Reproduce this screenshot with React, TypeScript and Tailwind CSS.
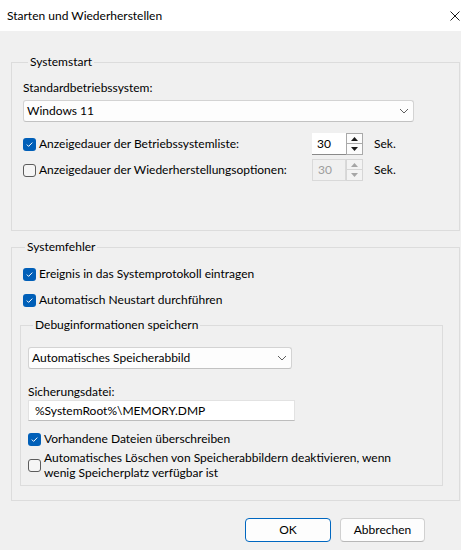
import React from 'react';

function Checkbox({ checked }: { checked?: boolean }) {
  if (checked) {
    return (
      <span className="flex h-[13px] w-[13px] shrink-0 items-center justify-center rounded-[3px] bg-[#005fb8]">
        <svg width="9" height="9" viewBox="0 0 9 9">
          <path d="M1.8 4.6 3.6 6.4 7.3 2.6" fill="none" stroke="#ffffff" strokeWidth="1" />
        </svg>
      </span>
    );
  }
  return <span className="h-[13px] w-[13px] shrink-0 rounded-[3px] border border-[#5c5c5c] bg-[#f5f5f5]" />;
}

function Chevron() {
  return (
    <svg width="10" height="6" viewBox="0 0 10 6">
      <path d="M1 1 5 5 9 1" fill="none" stroke="#5f5f5f" strokeWidth="1" />
    </svg>
  );
}

function Spin({ value, disabled }: { value: string; disabled?: boolean }) {
  const tri = disabled ? '#a6a6a6' : '#1a1a1a';
  const btn = disabled ? 'border-[#d6d6d6] bg-[#f3f3f3]' : 'border-[#a9a9a9] bg-[#fcfcfc]';
  return (
    <div className="flex h-[22px]">
      <div
        className={
          disabled
            ? 'flex w-[34px] items-center border border-[#d9d9d9] pl-[5px] text-[#9d9d9d]'
            : 'flex w-[34px] items-center border-b border-[#8a8a8a] bg-white pl-[5px]'
        }
      >
        {value}
      </div>
      <div className="flex w-[17px] flex-col">
        <div className={`flex h-[11px] items-center justify-center border ${btn}`}>
          <svg width="7" height="4" viewBox="0 0 7 4">
            <path d="M0 4 3.5 0 7 4Z" fill={tri} />
          </svg>
        </div>
        <div className={`flex h-[11px] items-center justify-center border border-t-0 ${btn}`}>
          <svg width="7" height="4" viewBox="0 0 7 4">
            <path d="M0 0 3.5 4 7 0Z" fill={tri} />
          </svg>
        </div>
      </div>
    </div>
  );
}

function Group({ title, className, children }: { title: string; className?: string; children: React.ReactNode }) {
  return (
    <fieldset className={`border border-[#dcdcdc] ${className ?? ''}`}>
      <legend className="ml-[5px] px-[2px] leading-4">{title}</legend>
      {children}
    </fieldset>
  );
}

export default function App() {
  return (
    <div className="h-[550px] w-[461px] overflow-hidden bg-[#f0f0f0] font-['Lato',sans-serif] text-[12px] leading-4 text-black">
      {/* Title bar */}
      <div className="flex h-[31px] items-center justify-between bg-white pl-[7px] pr-[1px]">
        <span>Starten und Wiederherstellen</span>
        <svg width="10" height="10" viewBox="0 0 10 10">
          <path d="M0.5 0.5 9.5 9.5M9.5 0.5 0.5 9.5" stroke="#1a1a1a" strokeWidth="1" />
        </svg>
      </div>

      <div className="pl-[11px] pt-[23px]">
        {/* Systemstart */}
        <Group title="Systemstart" className="w-[449px] pb-[49px] pl-[11px]">
          <div className="mt-[10px]">Standardbetriebssystem:</div>
          <div className="mt-[4px] flex h-[22px] w-[391px] items-center justify-between rounded-[3px] border border-[#d3d3d3] border-b-[#c2c2c2] bg-[#fdfdfd] pl-[3px] pr-[4px]">
            <span>Windows 11</span>
            <Chevron />
          </div>
          <div className="mt-[11px] flex items-center">
            <div className="flex w-[289px] items-center gap-[3px]">
              <Checkbox checked />
              <span>Anzeigedauer der Betriebssystemliste:</span>
            </div>
            <Spin value="30" />
            <span className="ml-[11px]">Sek.</span>
          </div>
          <div className="mt-[4px] flex items-center">
            <div className="flex w-[289px] items-center gap-[3px]">
              <Checkbox />
              <span>Anzeigedauer der Wiederherstellungsoptionen:</span>
            </div>
            <Spin value="30" disabled />
            <span className="ml-[11px]">Sek.</span>
          </div>
        </Group>

        {/* Systemfehler */}
        <Group title="Systemfehler" className="mt-[8px] w-[449px] pb-[14px] pl-[8px]">
          <div className="ml-[3px] mt-[11px] flex items-center gap-[3px]">
            <Checkbox checked />
            <span>Ereignis in das Systemprotokoll eintragen</span>
          </div>
          <div className="ml-[3px] mt-[10px] flex items-center gap-[3px]">
            <Checkbox checked />
            <span>Automatisch Neustart durchführen</span>
          </div>

          <Group title="Debuginformationen speichern" className="mt-[9px] w-[423px] pb-[5px] pl-[7px]">
            <div className="mt-[14px] flex h-[22px] w-[264px] items-center justify-between rounded-[3px] border border-[#d3d3d3] border-b-[#c2c2c2] bg-[#fdfdfd] pl-[3px] pr-[4px]">
              <span>Automatisches Speicherabbild</span>
              <Chevron />
            </div>
            <div className="mt-[15px]">Sicherungsdatei:</div>
            <div className="flex h-[21px] w-[267px] items-center border border-[#e2e2e2] border-b-[#bdbdbd] bg-white pl-[6px]">
              %SystemRoot%\MEMORY.DMP
            </div>
            <div className="mt-[10px] flex items-center gap-[3px]">
              <Checkbox checked />
              <span>Vorhandene Dateien überschreiben</span>
            </div>
            <div className="mt-[3px] flex items-center gap-[3px]">
              <Checkbox />
              <span className="leading-[15px]">
                Automatisches Löschen von Speicherabbildern deaktivieren, wenn
                <br />
                wenig Speicherplatz verfügbar ist
              </span>
            </div>
          </Group>
        </Group>
      </div>

      {/* Buttons */}
      <div className="mt-[17px] flex justify-end gap-[9px] pr-[36px]">
        <button className="h-[24px] w-[86px] rounded-[4px] border border-[#0067c0] bg-[#fdfdfd]">OK</button>
        <button className="h-[24px] w-[85px] rounded-[4px] border border-[#d0d0d0] border-b-[#b8b8b8] bg-[#fdfdfd]">
          Abbrechen
        </button>
      </div>
    </div>
  );
}
